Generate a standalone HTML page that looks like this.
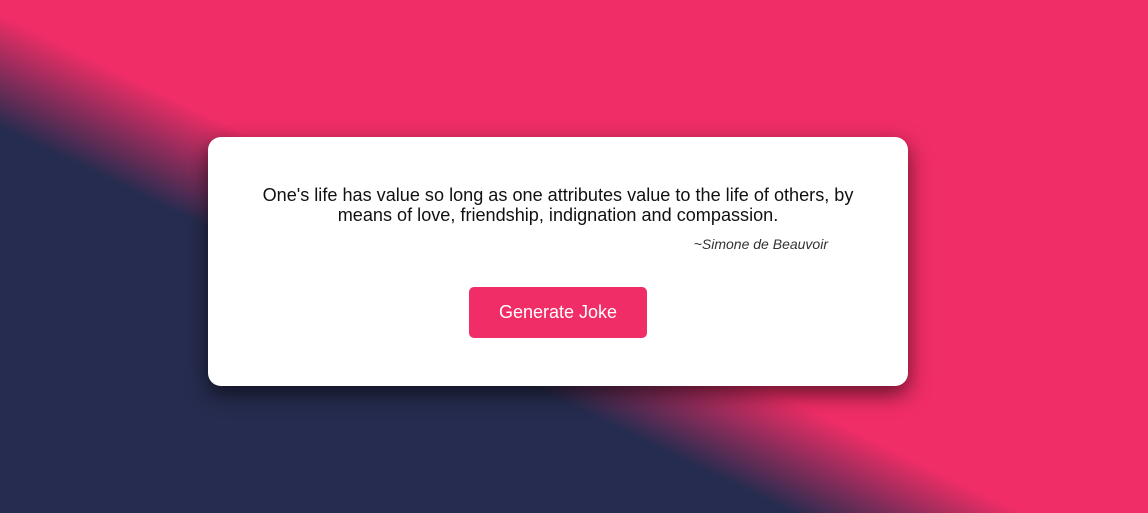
<!DOCTYPE html>
<html><head><style>
html,body{margin:0;padding:0;width:1148px;height:513px;overflow:hidden}
body{background:linear-gradient(26deg,#262c4f 0%,#262c4f 36%,#f02d66 46.5%,#f02d66 100%);font-family:"Liberation Sans",sans-serif;position:relative}
.card{position:absolute;left:208px;top:137px;width:700px;height:249px;background:#fff;border-radius:13px;box-shadow:0 8px 22px rgba(0,0,0,.6)}
.q{position:absolute;left:46px;right:46px;top:48px;text-align:center;font-size:18.1px;line-height:20px;color:#111}
.a{position:absolute;right:80px;top:99px;font-style:italic;font-size:14px;color:#333}
.btn{position:absolute;left:261px;top:150px;width:178px;height:51px;background:#f02d66;border-radius:5px;color:#fff;font-size:18px;line-height:51px;text-align:center}
</style></head><body>
<div class="card">
<div class="q">One's life has value so long as one attributes value to the life of others, by means of love, friendship, indignation and compassion.</div>
<div class="a">~Simone de Beauvoir</div>
<div class="btn">Generate Joke</div>
</div>
</body></html>
